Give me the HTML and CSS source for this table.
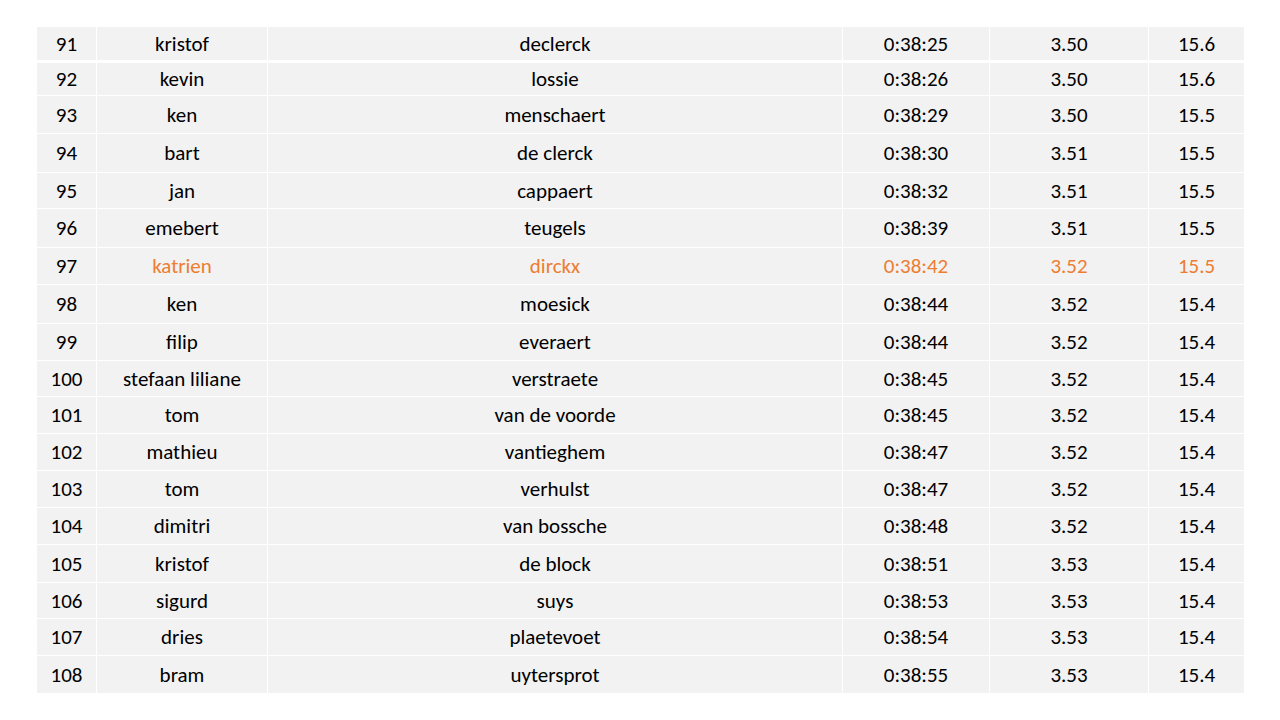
FILE: index.html
```html
<!DOCTYPE html>
<html>
<head>
<meta charset="utf-8">
<link rel="stylesheet" href="styles.css">
</head>
<body>
<div class="table">
  <div class="row first"><div class="cell">91</div><div class="cell">kristof</div><div class="cell">declerck</div><div class="cell">0:38:25</div><div class="cell">3.50</div><div class="cell">15.6</div></div>
  <div class="row short"><div class="cell">92</div><div class="cell">kevin</div><div class="cell">lossie</div><div class="cell">0:38:26</div><div class="cell">3.50</div><div class="cell">15.6</div></div>
  <div class="row tall"><div class="cell">93</div><div class="cell">ken</div><div class="cell">menschaert</div><div class="cell">0:38:29</div><div class="cell">3.50</div><div class="cell">15.5</div></div>
  <div class="row taller"><div class="cell">94</div><div class="cell">bart</div><div class="cell">de clerck</div><div class="cell">0:38:30</div><div class="cell">3.51</div><div class="cell">15.5</div></div>
  <div class="row low"><div class="cell">95</div><div class="cell">jan</div><div class="cell">cappaert</div><div class="cell">0:38:32</div><div class="cell">3.51</div><div class="cell">15.5</div></div>
  <div class="row taller"><div class="cell">96</div><div class="cell">emebert</div><div class="cell">teugels</div><div class="cell">0:38:39</div><div class="cell">3.51</div><div class="cell">15.5</div></div>
  <div class="row highlight"><div class="cell">97</div><div class="cell">katrien</div><div class="cell">dirckx</div><div class="cell">0:38:42</div><div class="cell">3.52</div><div class="cell">15.5</div></div>
  <div class="row taller"><div class="cell">98</div><div class="cell">ken</div><div class="cell">moesick</div><div class="cell">0:38:44</div><div class="cell">3.52</div><div class="cell">15.4</div></div>
  <div class="row"><div class="cell">99</div><div class="cell">filip</div><div class="cell">everaert</div><div class="cell">0:38:44</div><div class="cell">3.52</div><div class="cell">15.4</div></div>
  <div class="row low"><div class="cell">100</div><div class="cell">stefaan liliane</div><div class="cell">verstraete</div><div class="cell">0:38:45</div><div class="cell">3.52</div><div class="cell">15.4</div></div>
  <div class="row"><div class="cell">101</div><div class="cell">tom</div><div class="cell">van de voorde</div><div class="cell">0:38:45</div><div class="cell">3.52</div><div class="cell">15.4</div></div>
  <div class="row"><div class="cell">102</div><div class="cell">mathieu</div><div class="cell">vantieghem</div><div class="cell">0:38:47</div><div class="cell">3.52</div><div class="cell">15.4</div></div>
  <div class="row"><div class="cell">103</div><div class="cell">tom</div><div class="cell">verhulst</div><div class="cell">0:38:47</div><div class="cell">3.52</div><div class="cell">15.4</div></div>
  <div class="row"><div class="cell">104</div><div class="cell">dimitri</div><div class="cell">van bossche</div><div class="cell">0:38:48</div><div class="cell">3.52</div><div class="cell">15.4</div></div>
  <div class="row tall"><div class="cell">105</div><div class="cell">kristof</div><div class="cell">de block</div><div class="cell">0:38:51</div><div class="cell">3.53</div><div class="cell">15.4</div></div>
  <div class="row low"><div class="cell">106</div><div class="cell">sigurd</div><div class="cell">suys</div><div class="cell">0:38:53</div><div class="cell">3.53</div><div class="cell">15.4</div></div>
  <div class="row"><div class="cell">107</div><div class="cell">dries</div><div class="cell">plaetevoet</div><div class="cell">0:38:54</div><div class="cell">3.53</div><div class="cell">15.4</div></div>
  <div class="row tall"><div class="cell">108</div><div class="cell">bram</div><div class="cell">uytersprot</div><div class="cell">0:38:55</div><div class="cell">3.53</div><div class="cell">15.4</div></div>
</div>
</body>
</html>
```

FILE: styles.css
```css
html, body {
  margin: 0;
  padding: 0;
  background: #ffffff;
}

body {
  font-family: "Carlito", "Lato", "Liberation Sans", sans-serif;
  font-size: 21px;
  color: #000000;
  padding: 27px 0 0 37px;
}

.table {
  display: flex;
  flex-direction: column;
  gap: 1px;
  width: 1207px;
}

.row {
  display: grid;
  grid-template-columns: 59px 170px 574px 146px 158px 95px;
  column-gap: 1px;
  height: 36px;
}

.row.first {
  height: 33px;
  margin-bottom: 2px;
}

.row.short {
  height: 32px;
}

.row.low {
  height: 35px;
}

.row.tall {
  height: 37px;
}

.row.taller {
  height: 38px;
}

.cell {
  background: #f2f2f2;
  display: flex;
  align-items: center;
  justify-content: center;
  white-space: nowrap;
  line-height: 1;
  padding-top: 1px;
}

.row.highlight .cell + .cell {
  color: #ed7d31;
}
```
